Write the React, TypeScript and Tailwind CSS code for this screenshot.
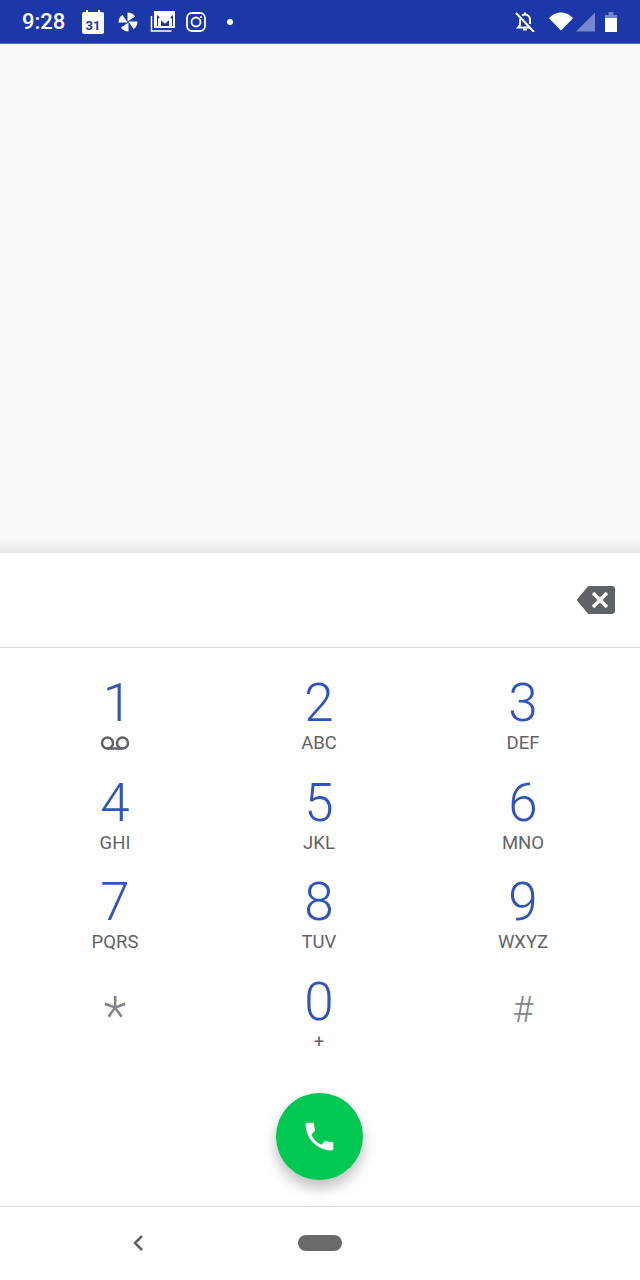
const KEYS = [
  { d: "1", l: "" },
  { d: "2", l: "ABC" },
  { d: "3", l: "DEF" },
  { d: "4", l: "GHI" },
  { d: "5", l: "JKL" },
  { d: "6", l: "MNO" },
  { d: "7", l: "PQRS" },
  { d: "8", l: "TUV" },
  { d: "9", l: "WXYZ" },
];

const BLADE = "M10.500 10.500V1.500c3.500 0 6 1.500 7.500 4z";

function StatusBar() {
  return (
    <div className="h-[44px] bg-[#1b37a8] border-b border-[#5068c0] flex items-center text-white shrink-0">
      <span className="ml-[22px] w-[42px] text-[22px] leading-none font-medium">9:28</span>
      <svg className="ml-[18px]" width="22" height="24" viewBox="0 0 22 24">
        <path d="M2 2h2V0h2v2h10V0h2v2h2a2 2 0 0 1 2 2v18a2 2 0 0 1-2 2H2a2 2 0 0 1-2-2V4a2 2 0 0 1 2-2z" fill="#fff" />
        <text x="11" y="20" textAnchor="middle" fontSize="13" fontWeight="700" fill="#1b37a8" fontFamily="Roboto, sans-serif">31</text>
      </svg>
      <svg className="ml-[13px]" width="22" height="22" viewBox="0 0 22 22" fill="#fff">
        <path d={BLADE} />
        <path d={BLADE} transform="rotate(90 11 11)" />
        <path d={BLADE} transform="rotate(180 11 11)" />
        <path d={BLADE} transform="rotate(270 11 11)" />
      </svg>
      <svg className="ml-[11px]" width="26" height="24" viewBox="0 0 26 24" fill="none">
        <path d="M4 1h21v17H4z" fill="#fff" />
        <path d="M7 5l8 6.500L23 5v11H7z" fill="#1b37a8" />
        <path d="M9.500 16V8.500M20.500 16V8.500" stroke="#fff" strokeWidth="3" />
        <path d="M9.500 7.500l5.500 5 5.500-5" stroke="#fff" strokeWidth="2" />
        <path d="M1.500 6v15h20" stroke="#fff" strokeWidth="1.500" />
      </svg>
      <svg className="ml-[10px]" width="20" height="20" viewBox="0 0 20 20" fill="none" stroke="#fff" strokeWidth="1.800">
        <rect x="1" y="1" width="18" height="18" rx="5" />
        <circle cx="10" cy="10" r="4.500" />
        <circle cx="15" cy="5" r="1" fill="#fff" stroke="none" />
      </svg>
      <span className="ml-[21px] w-[6px] h-[6px] rounded-full bg-white" />
      <svg className="ml-auto" width="20" height="20" viewBox="0 0 20 20" fill="none" stroke="#fff" strokeWidth="2">
        <path d="M1 1l18 19" />
        <path d="M5 7v6l-2 2.500h12M7 3.500C8 2.800 9 2.500 10 2.500c3 0 5 2.400 5 5.500v4" />
        <path d="M10 2.500V.5" />
        <path d="M8 17.500h4" />
      </svg>
      <svg className="ml-[14px]" width="24" height="19" viewBox="0 0 25 19" fill="#fff">
        <path d="M12.500 19L0 6C3 2.500 7.500 0 12.500 0S22 2.500 25 6z" />
      </svg>
      <svg className="ml-[3px]" width="19" height="20" viewBox="0 0 20 20" fill="#fff" fillOpacity="0.4">
        <path d="M20 0v20H0z" />
      </svg>
      <svg className="ml-[10px] mr-[23px]" width="12" height="20" viewBox="0 0 12 20">
        <path d="M0 3h3.500V0h5v3H12v4H0z" fill="#fff" fillOpacity="0.4" />
        <path d="M0 6h12v14H0z" fill="#fff" />
      </svg>
    </div>
  );
}

function Key({ d, l }: { d: string; l: string }) {
  return (
    <div className="h-[99.500px] flex flex-col items-center pt-[5px]">
      <span className={d === "1" ? "text-[53px] leading-[43px] font-light text-[#2f55bd] ml-[5px]" : "text-[53px] leading-[43px] font-light text-[#2f55bd]"}>{d}</span>
      {l ? (
        <span className="text-[18.500px] leading-[20px] text-[#5f6368] mt-[8px]">{l}</span>
      ) : (
        <svg className="mt-[10px]" width="30" height="16" viewBox="0 0 30 16" fill="none" stroke="#5f6368" strokeWidth="2.500">
          <circle cx="7.500" cy="8" r="5.500" />
          <circle cx="22.500" cy="8" r="5.500" />
          <path d="M7.500 13.500h15" />
        </svg>
      )}
    </div>
  );
}

export default function App() {
  return (
    <div className="w-[640px] h-[1280px] bg-white flex flex-col overflow-hidden font-['Roboto',sans-serif]">
      <StatusBar />
      <div className="h-[509px] shrink-0 bg-[#fafafa] flex flex-col justify-end">
        <div className="h-[14px] bg-gradient-to-b from-[#fafafa] to-[#e4e4e4]" />
      </div>
      <div className="h-[95px] shrink-0 border-b border-[#dcdcdc] flex items-center justify-end pr-[25px]">
        <svg width="38" height="28" viewBox="0 0 38 28">
          <path d="M12 1.500h23a1.500 1.500 0 0 1 1.500 1.500v22a1.500 1.500 0 0 1-1.500 1.500H12L1.500 14z" fill="#5f6368" stroke="#5f6368" strokeWidth="3" strokeLinejoin="round" />
          <path d="M16 7l14 14M30 7L16 21" stroke="#fff" strokeWidth="3.500" />
        </svg>
      </div>
      <div className="pt-[29px] pl-[13px] pr-[15px] grid grid-cols-3 shrink-0">
        {KEYS.map((k) => (
          <Key key={k.d} d={k.d} l={k.l} />
        ))}
        <div className="h-[99.500px] flex justify-center pt-[14px]">
          <span className="text-[53px] leading-[53px] font-light text-[#80868b]">*</span>
        </div>
        <Key d="0" l="+" />
        <div className="h-[99.500px] flex justify-center pt-[8px]">
          <span className="text-[36px] leading-[53px] font-light text-[#80868b]">#</span>
        </div>
      </div>
      <div className="flex justify-center mt-[18px] shrink-0 pr-[1px]">
        <div className="w-[87px] h-[87px] rounded-full bg-[#00c853] flex items-center justify-center shadow-[0_8px_14px_rgba(0,0,0,0.25)]">
          <svg width="37" height="37" viewBox="0 0 24 24" fill="#fff">
            <path d="M6.620 10.790c1.440 2.830 3.760 5.140 6.590 6.590l2.200-2.200c.27-.27.67-.36 1.020-.24 1.120.37 2.330.57 3.570.57.55 0 1 .45 1 1V20c0 .55-.45 1-1 1-9.390 0-17-7.610-17-17 0-.55.45-1 1-1h3.500c.55 0 1 .45 1 1 0 1.250.2 2.450.57 3.570.11.35.03.74-.25 1.020l-2.200 2.200z" />
          </svg>
        </div>
      </div>
      <div className="mt-[26px] border-t border-[#dcdcdc] flex-1 flex items-center pl-[131px] pb-[2px]">
        <svg width="14" height="20" viewBox="0 0 14 20" fill="none" stroke="#5f6368" strokeWidth="2.500">
          <path d="M11 3L4 10l7 7" />
        </svg>
        <div className="ml-[153px] w-[44px] h-[16px] rounded-full bg-[#6a6a6a]" />
      </div>
    </div>
  );
}
